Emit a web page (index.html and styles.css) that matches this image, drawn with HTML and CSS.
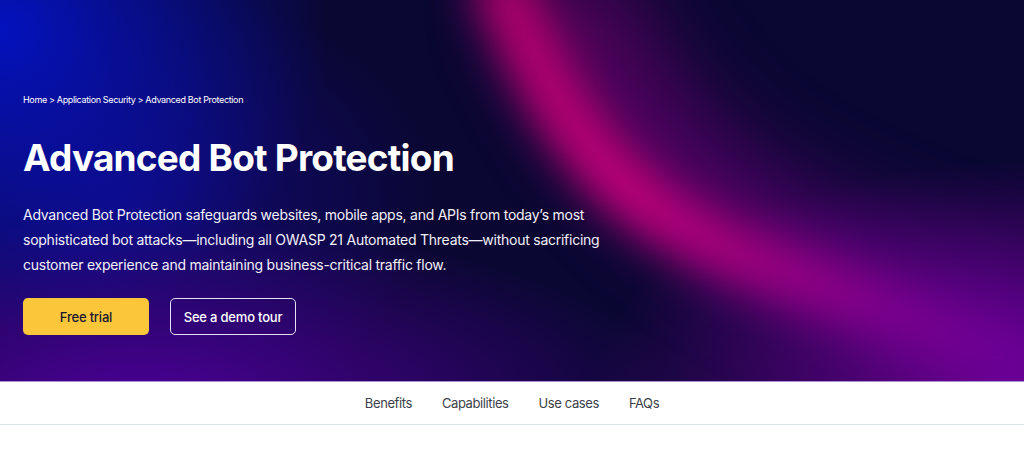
FILE: index.html
```html
<!DOCTYPE html>
<html lang="en">
<head>
<meta charset="utf-8">
<title>Advanced Bot Protection</title>
<link rel="stylesheet" href="styles.css">
</head>
<body>
<section class="hero">
  <svg class="hero-bg" viewBox="0 0 1024 381" preserveAspectRatio="none" aria-hidden="true">
    <defs>
      <filter id="soft" x="-50%" y="-50%" width="200%" height="200%"><feGaussianBlur stdDeviation="22"/></filter>
      <filter id="wide" x="-50%" y="-50%" width="200%" height="200%"><feGaussianBlur stdDeviation="45"/></filter>
      <linearGradient id="streak" gradientUnits="userSpaceOnUse" x1="500" y1="0" x2="1000" y2="381">
        <stop offset="0" stop-color="#b4006e"/>
        <stop offset="0.35" stop-color="#c8007c"/>
        <stop offset="0.55" stop-color="#a8007e"/>
        <stop offset="0.8" stop-color="#7c008e"/>
        <stop offset="1" stop-color="#6a0096"/>
      </linearGradient>
      <linearGradient id="streakWide" gradientUnits="userSpaceOnUse" x1="500" y1="0" x2="1000" y2="381">
        <stop offset="0" stop-color="#74006a"/>
        <stop offset="0.5" stop-color="#640076"/>
        <stop offset="1" stop-color="#5e0092"/>
      </linearGradient>
    </defs>
    <g filter="url(#wide)" opacity="0.8">
      <path d="M550 -30 C 595 60, 645 150, 725 205 S 880 285, 1080 360" stroke="url(#streakWide)" stroke-width="100" fill="none"/>
    </g>
    <g filter="url(#soft)">
      <path d="M495 -30 C 535 60, 572 150, 652 207 S 800 272, 1060 380" stroke="url(#streak)" stroke-width="56" fill="none"/>
    </g>
  </svg>
  <div class="hero-inner">
    <nav class="crumbs">Home &gt; Application Security &gt; Advanced Bot Protection</nav>
    <h1 class="title">Advanced Bot Protection</h1>
    <p class="lead">Advanced Bot Protection safeguards websites, mobile apps, and APIs from today’s most sophisticated bot attacks—including all OWASP 21 Automated Threats—without sacrificing customer experience and maintaining business-critical traffic flow.</p>
    <div class="actions">
      <a class="btn btn-primary" href="#">Free trial</a>
      <a class="btn btn-outline" href="#">See a demo tour</a>
    </div>
  </div>
</section>
<nav class="subnav">
  <a href="#">Benefits</a>
  <a href="#">Capabilities</a>
  <a href="#">Use cases</a>
  <a href="#">FAQs</a>
</nav>
</body>
</html>
```
FILE: styles.css
```css
* { box-sizing: border-box; }
body {
  margin: 0;
  font-family: Inter, "Noto Sans", sans-serif;
  background: #fff;
}
.hero {
  position: relative;
  height: 382px;
  overflow: hidden;
  border-bottom: 1px solid #a98fd0;
  color: #fff;
  background:
    radial-gradient(ellipse 330px 300px at 0 30px, rgba(4, 18, 190, 1) 0%, rgba(4, 18, 190, 0.55) 45%, rgba(4, 18, 190, 0) 100%),
    radial-gradient(ellipse 540px 180px at 140px 400px, rgba(76, 0, 150, 1) 0%, rgba(76, 0, 150, 0.5) 50%, rgba(76, 0, 150, 0) 100%),
    radial-gradient(ellipse 440px 230px at 1030px 390px, rgba(112, 0, 150, 1) 0%, rgba(112, 0, 150, 0.5) 50%, rgba(112, 0, 150, 0) 100%),
    radial-gradient(ellipse 320px 220px at 120px 200px, rgba(20, 10, 140, 0.8) 0%, rgba(20, 10, 140, 0) 100%),
    #0a0732;
}
.hero-bg {
  position: absolute;
  inset: 0;
  width: 100%;
  height: 100%;
  display: block;
}
.hero-inner {
  position: relative;
  padding: 93px 23px 0;
}
.crumbs {
  font-size: 9px;
  line-height: 14px;
  letter-spacing: -0.35px;
}
.title {
  margin: 28px 0 0;
  font-size: 37px;
  line-height: 46px;
  font-weight: 700;
  letter-spacing: -0.8px;
}
.lead {
  margin: 21px 0 0;
  width: 600px;
  font-size: 14px;
  line-height: 25px;
  letter-spacing: -0.25px;
  color: #f2f0f8;
}
.actions {
  display: flex;
  gap: 21px;
  margin-top: 21px;
}
.btn {
  display: flex;
  align-items: center;
  justify-content: center;
  width: 126px;
  height: 37px;
  border-radius: 5px;
  font-size: 13px;
  font-weight: 500;
  letter-spacing: -0.2px;
  text-decoration: none;
}
.btn-primary {
  background: #fbc63a;
  color: #1b1530;
}
.btn-outline {
  border: 1.5px solid #e6e2f2;
  color: #fff;
}
.subnav {
  display: flex;
  justify-content: center;
  gap: 30px;
  height: 43px;
  align-items: center;
  border-bottom: 1px solid #dde3ea;
}
.subnav a {
  font-size: 13px;
  letter-spacing: -0.4px;
  color: #3c3f4a;
  text-decoration: none;
}
```
